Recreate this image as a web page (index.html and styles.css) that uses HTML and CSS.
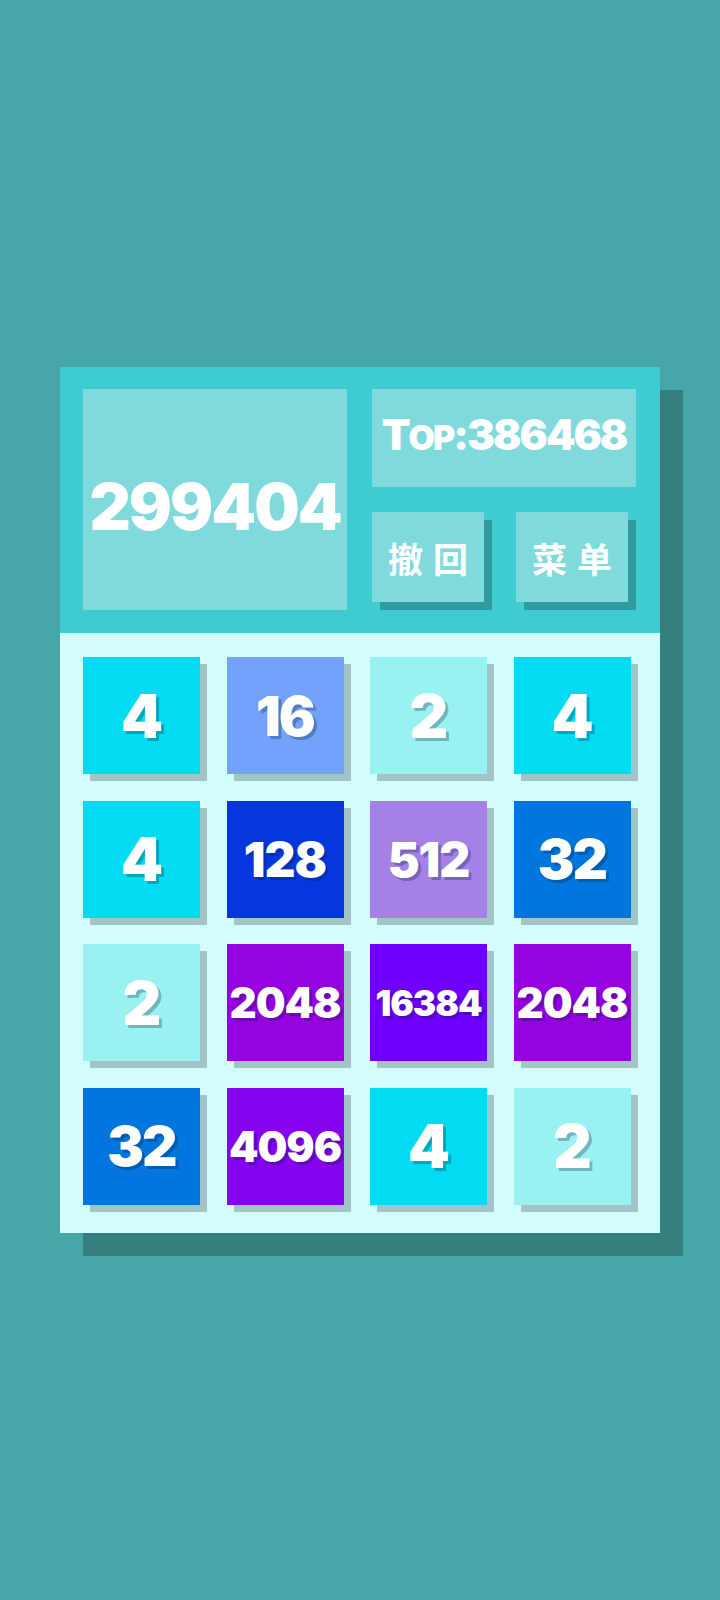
FILE: index.html
```html
<!DOCTYPE html>
<html lang="zh">
<head>
<meta charset="utf-8">
<title>2048</title>
<link rel="stylesheet" href="styles.css">
</head>
<body>
<div class="page">
  <div class="card">
    <div class="header">
      <div class="score">299404</div>
      <div class="side">
        <div class="top">T<span class="sc">OP</span>:386468</div>
        <div class="buttons">
          <div class="btn">撤回</div>
          <div class="btn">菜单</div>
        </div>
      </div>
    </div>
    <div class="board">
      <div class="tile t4 d1">4</div>
      <div class="tile t16 d2">16</div>
      <div class="tile t2 d1">2</div>
      <div class="tile t4 d1">4</div>

      <div class="tile t4 d1">4</div>
      <div class="tile t128 d3">128</div>
      <div class="tile t512 d3">512</div>
      <div class="tile t32 d2">32</div>

      <div class="tile t2 d1">2</div>
      <div class="tile t2048 d4">2048</div>
      <div class="tile t16384 d5">16384</div>
      <div class="tile t2048 d4">2048</div>

      <div class="tile t32 d2">32</div>
      <div class="tile t4096 d4">4096</div>
      <div class="tile t4 d1">4</div>
      <div class="tile t2 d1">2</div>
    </div>
  </div>
</div>
</body>
</html>
```

FILE: styles.css
```css
html, body {
  margin: 0;
  padding: 0;
}
body {
  background: #47a6a7;
  font-family: "Inter", "Lato", "Noto Sans", "Noto Sans CJK SC", sans-serif;
}
.page {
  width: 720px;
  height: 1600px;
  padding: 367px 0 0 60px;
  box-sizing: border-box;
}
.card {
  width: 600px;
  box-shadow: 23px 23px 0 #357f7f;
}
.header {
  background: #3fcbd2;
  padding: 22px 24px 23px 23px;
  display: flex;
  gap: 25px;
}
.score {
  width: 264px;
  height: 221px;
  background: #80dadc;
  color: #fff;
  font-weight: 900;
  font-size: 64px;
  display: flex;
  align-items: center;
  justify-content: center;
  letter-spacing: -2px;
  padding-top: 14px;
  box-sizing: border-box;
}
.side {
  width: 264px;
  display: flex;
  flex-direction: column;
  gap: 25px;
}
.top {
  height: 98px;
  background: #80dadc;
  color: #fff;
  font-weight: 900;
  font-size: 42px;
  display: flex;
  align-items: baseline;
  justify-content: center;
  padding-top: 20px;
  box-sizing: border-box;
  letter-spacing: -2px;
}
.sc {
  font-size: 34px;
}
.buttons {
  display: flex;
  gap: 32px;
}
.btn {
  width: 112px;
  height: 90px;
  background: #80dadc;
  box-shadow: 8px 8px 0 #2f9ba1;
  color: #fff;
  font-family: "Noto Sans CJK SC", sans-serif;
  font-weight: 700;
  font-size: 35px;
  letter-spacing: 10px;
  padding-left: 10px;
  box-sizing: border-box;
  display: flex;
  align-items: center;
  justify-content: center;
}
.board {
  background: #d3fcfd;
  padding: 24px 29px 28px 23px;
  display: grid;
  grid-template-columns: repeat(4, 117px);
  grid-auto-rows: 117px;
  gap: 26.5px;
}
.tile {
  box-shadow: 7px 7px 0 #a3c4c6;
  color: #fff;
  font-weight: 900;
  display: flex;
  align-items: center;
  justify-content: center;
  text-shadow: 3px 3px 0 rgba(0, 30, 60, 0.28);
  letter-spacing: -1px;
}
.d1 { font-size: 60px; }
.d2 { font-size: 55px; letter-spacing: -2px; }
.d3 { font-size: 48px; }
.d4 { font-size: 42px; }
.d5 { font-size: 35px; }
.t2 { background: #9af1f1; }
.t4 { background: #02dbf1; }
.t16 { background: #72a2fb; }
.t32 { background: #0276df; }
.t128 { background: #0637de; }
.t512 { background: #a581e7; }
.t2048 { background: #9603e1; }
.t4096 { background: #8503ef; }
.t16384 { background: #7000fe; }
```
